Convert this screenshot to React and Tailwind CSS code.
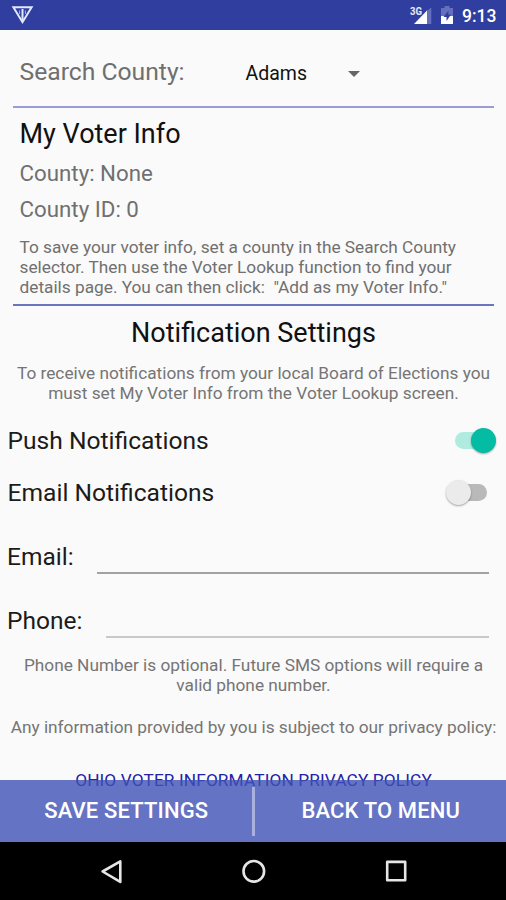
import { useState } from 'react';

// Android status bar
function StatusBar() {
  return (
    <header className="flex h-[30px] items-center bg-[#303f9f] text-white">
      <svg className="ml-[11px] h-[20px] w-[23px]" viewBox="0 0 23 20" fill="none">
        <path d="M2.4 2.3H20.6L11.5 17.2Z" stroke="#e4e8fb" strokeWidth="2" />
        <path d="M11.5 4V15" stroke="#e4e8fb" strokeWidth="2" />
        <path d="M8.6 5.4V9M14.4 5.4V9" stroke="#a9b1e0" strokeWidth="1" />
      </svg>
      <div className="ml-auto flex items-center">
        <svg className="h-[20px] w-[24px]" viewBox="0 0 24 20">
          <path d="M17.5 6L22.3 2.4V19H17.5Z" fill="#6470bb" />
          <path d="M5 19L18 5.4V19Z" fill="#fff" />
          <text x="1" y="9.5" fill="#e8ebfa" fontFamily="Roboto, sans-serif" fontSize="10" fontWeight="700" textLength="12" lengthAdjust="spacingAndGlyphs">3G</text>
        </svg>
        <svg className="ml-[8px] h-[20px] w-[12px]" viewBox="0 0 12 20">
          <path d="M0 3H3.5V1H8.5V3H12V12H0Z" fill="#6470bb" />
          <path d="M0 11H12V19H0Z" fill="#fff" />
          <path d="M7.5 5.5L2.5 12H5.5V16L10 9.5H7.2Z" fill="#303f9f" />
        </svg>
        <span className="ml-[9px] w-[44px] pt-[2px] text-[17.5px] leading-[28px] font-medium whitespace-nowrap">9:13</span>
      </div>
    </header>
  );
}

function Switch({ label, checked, onChange }) {
  return (
    <div className="flex h-[52px] items-center justify-between pl-[7.5px]">
      <span className="pt-[2px] text-[24.6px]">{label}</span>
      <button
        type="button"
        role="switch"
        aria-checked={checked}
        aria-label={label}
        onClick={onChange}
        className={`relative mt-[1px] h-[26px] w-[41px] ${checked ? 'mr-[10px]' : 'mr-[19px]'}`}
      >
        <span
          className={`absolute top-[4px] h-[17px] w-[34px] rounded-full ${
            checked ? 'left-0 bg-[#b0ebe0]' : 'right-0 bg-[#b9b9b9]'
          }`}
        />
        <span
          className={`absolute top-0 size-[25px] rounded-full shadow-[0_1px_2px_rgba(0,0,0,0.35)] ${
            checked ? 'right-0 bg-[#04bba4]' : 'left-0 bg-[#ebebeb]'
          }`}
        />
      </button>
    </div>
  );
}

function NavBar() {
  return (
    <nav className="flex h-[58px] items-center bg-black">
      <svg className="h-[58px] w-full" viewBox="0 0 506 58" fill="none" stroke="#e6e6e6" strokeWidth="2.6" strokeLinejoin="round">
        <path d="M120.3 19.3V39.9L102.6 29.5Z" />
        <circle cx="253.8" cy="29.3" r="10.3" />
        <rect x="387.2" y="19.9" width="18" height="18.4" />
      </svg>
    </nav>
  );
}

export default function App() {
  const [push, setPush] = useState(true);
  const [emailOn, setEmailOn] = useState(false);

  return (
    <div className="relative flex h-[900px] w-full flex-col overflow-hidden bg-[#fafafa] font-['Roboto',sans-serif] text-[#1b1b1b]">
      <StatusBar />

      <main className="flex flex-1 flex-col">
        {/* County selector */}
        <div className="mr-[12px] ml-[13px] flex h-[78px] items-center border-b-2 border-[#9a9dd3] pl-[6.5px]">
          <span className="w-[226px] pt-[8px] text-[24.7px] leading-[28px] text-[#6f6f6f]">Search County:</span>
          <button type="button" className="flex items-center pt-[11px] text-[19.5px] leading-[28px] text-[#111]">
            <span className="w-[102px] text-left">Adams</span>
            <span className="h-0 w-0 border-x-[6px] border-t-[6px] border-x-transparent border-t-[#666]" />
          </button>
        </div>

        {/* Voter info */}
        <section className="mr-[12px] ml-[13px] h-[198px] border-b-2 border-[#6b74bf] pl-[6.5px] text-[#707070]">
          <h1 className="pt-[10px] text-[27px] leading-[32px] text-[#111]">My Voter Info</h1>
          <p className="pt-[5px] text-[22.3px] leading-[36px]">County: None</p>
          <p className="text-[22.3px] leading-[36px]">County ID: 0</p>
          <p className="pt-[10px] text-[17.25px] leading-[20px] whitespace-pre">
            {'To save your voter info, set a county in the Search County\nselector. Then use the Voter Lookup function to find your\ndetails page. You can then click:  "Add as my Voter Info."'}
          </p>
        </section>

        {/* Notifications */}
        <h2 className="pt-[11px] pl-[1px] text-center text-[27px] leading-[32px] text-[#111]">Notification Settings</h2>
        <p className="pt-[14px] pl-[1px] text-center text-[17.25px] leading-[20px] whitespace-pre text-[#757575]">
          {'To receive notifications from your local Board of Elections you\nmust set My Voter Info from the Voter Lookup screen.'}
        </p>
        <div className="pt-[11px]">
          <Switch label="Push Notifications" checked={push} onChange={() => setPush(!push)} />
          <Switch label="Email Notifications" checked={emailOn} onChange={() => setEmailOn(!emailOn)} />
        </div>

        <label className="mt-[23px] flex h-[33px] items-start pr-[17px] pl-[7px]">
          <span className="w-[90px] text-[24.5px] leading-[32px]">Email:</span>
          <input type="email" className="h-[33px] min-w-0 flex-1 border-b-2 border-[#a2a2a2] outline-none" />
        </label>
        <label className="mt-[31px] flex h-[33px] items-start pr-[17px] pl-[7px]">
          <span className="w-[99px] text-[24.5px] leading-[32px]">Phone:</span>
          <input type="tel" className="h-[33px] min-w-0 flex-1 border-b-2 border-[#c8c8c8] outline-none" />
        </label>

        <p className="pt-[17px] pl-[1px] text-center text-[17.25px] leading-[20px] whitespace-pre text-[#757575]">
          {'Phone Number is optional. Future SMS options will require a\nvalid phone number.'}
        </p>
        <p className="pt-[22px] pl-[1px] text-center text-[17.25px] leading-[20px] whitespace-nowrap text-[#757575]">
          Any information provided by you is subject to our privacy policy:
        </p>
        <a href="#privacy" className="pt-[33px] pl-[1px] text-center text-[17.25px] leading-[20px] tracking-[0.12px] whitespace-nowrap text-[#2222a8]">
          OHIO VOTER INFORMATION PRIVACY POLICY
        </a>
      </main>

      <footer className="absolute inset-x-0 bottom-0">
        <div className="flex h-[62px] items-center bg-[#3f51b5]/80 text-[22px] font-medium tracking-[0.15px] text-white">
          <button type="button" className="h-[62px] flex-1 pb-[2px] pl-[1px]">SAVE SETTINGS</button>
          <span className="h-[49px] w-[3px] bg-[#a9b0dc]" />
          <button type="button" className="h-[62px] flex-1 pb-[2px] pl-[1px]">BACK TO MENU</button>
        </div>
        <NavBar />
      </footer>
    </div>
  );
}
